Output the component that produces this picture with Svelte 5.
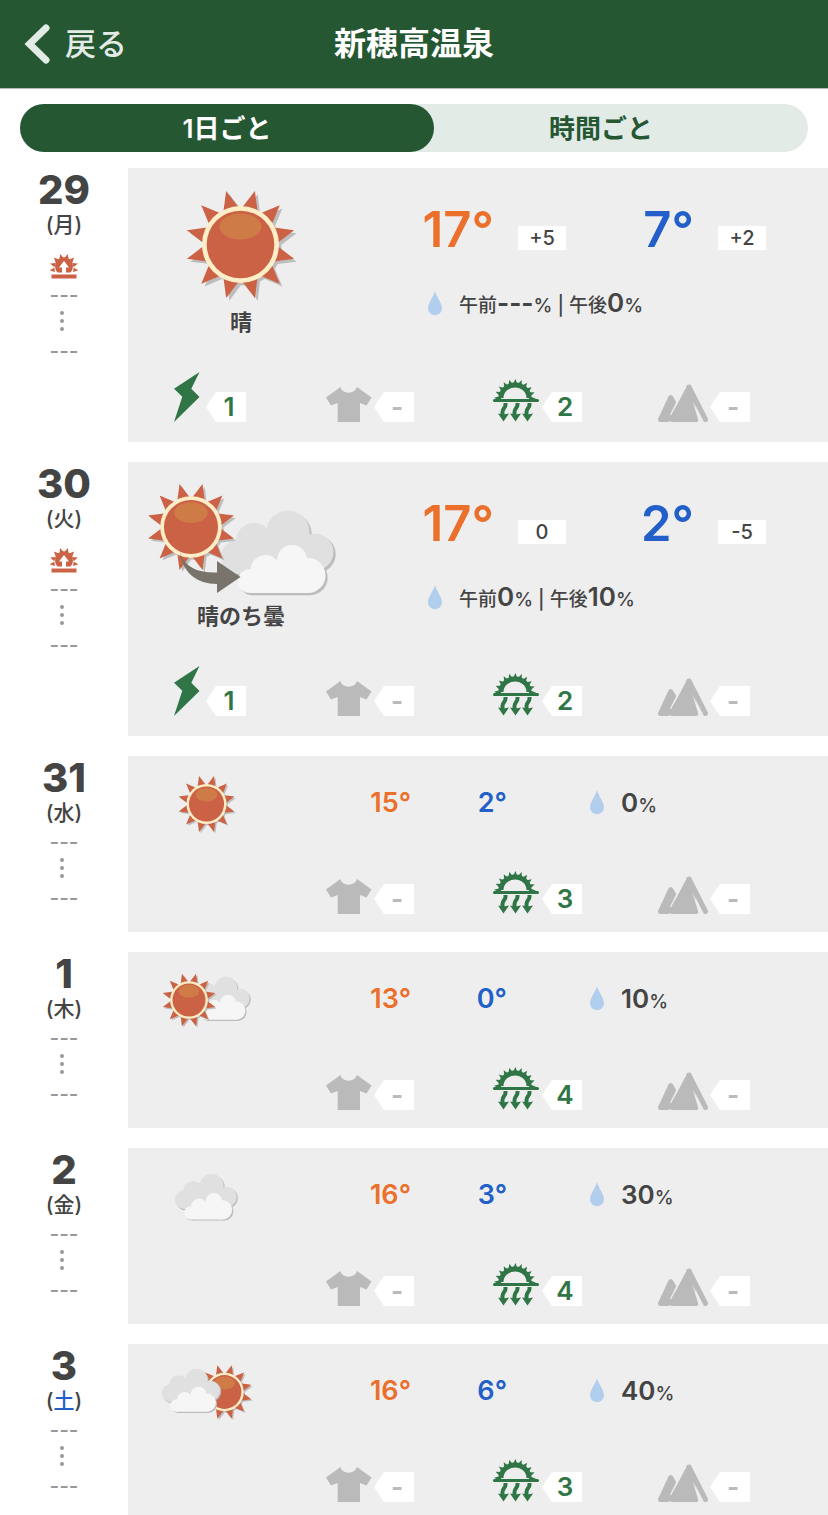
<script lang="ts">
  type Sky = 'sunny' | 'sunny-then-cloudy' | 'sunny-cloudy' | 'cloudy' | 'cloudy-sunny';

  interface Rain {
    label?: string;
    value: string;
  }

  interface Day {
    date: number;
    weekday: string;
    sky: Sky;
    skyLabel?: string;
    high: number;
    highDiff?: string;
    low: number;
    lowDiff?: string;
    rain: Rain[];
    thunder?: string;
    uv: string;
  }

  const days: Day[] = [
    {
      date: 29,
      weekday: '月',
      sky: 'sunny',
      skyLabel: '晴',
      high: 17,
      highDiff: '+5',
      low: 7,
      lowDiff: '+2',
      rain: [
        { label: '午前', value: '---' },
        { label: '午後', value: '0' }
      ],
      thunder: '1',
      uv: '2'
    },
    {
      date: 30,
      weekday: '火',
      sky: 'sunny-then-cloudy',
      skyLabel: '晴のち曇',
      high: 17,
      highDiff: '0',
      low: 2,
      lowDiff: '-5',
      rain: [
        { label: '午前', value: '0' },
        { label: '午後', value: '10' }
      ],
      thunder: '1',
      uv: '2'
    },
    { date: 31, weekday: '水', sky: 'sunny', high: 15, low: 2, rain: [{ value: '0' }], uv: '3' },
    { date: 1, weekday: '木', sky: 'sunny-cloudy', high: 13, low: 0, rain: [{ value: '10' }], uv: '4' },
    { date: 2, weekday: '金', sky: 'cloudy', high: 16, low: 3, rain: [{ value: '30' }], uv: '4' },
    { date: 3, weekday: '土', sky: 'cloudy-sunny', high: 16, low: 6, rain: [{ value: '40' }], uv: '3' }
  ];

  let tab = $state<'daily' | 'hourly'>('daily');

  const rays = Array.from({ length: 12 }, (_, i) => 15 + i * 30);
  const uvRays = Array.from({ length: 11 }, (_, i) => (i - 5) * 17);
  const riseRays = [-100, -72, -44, -15, 15, 44, 72, 100];
</script>

{#snippet sun(x: number, y: number, scale: number)}
  <g transform="translate({x} {y}) scale({scale})">
    <g transform="translate(3 3)" fill="#bdbdbd">
      {#each rays as r}
        <path d="M-8 -35L0 -55L8 -35z" transform="rotate({r})" />
      {/each}
      <circle r="38" />
    </g>
    {#each rays as r}
      <path d="M-8.500 -35L0 -55.500L8.500 -35z" transform="rotate({r})" fill="#cb6245" />
    {/each}
    <circle r="38.5" fill="#fdeec8" />
    <circle r="33.8" fill="#cb6245" />
    <ellipse cy="-18" rx="21" ry="13" fill="#cf7b47" />
  </g>
{/snippet}

{#snippet cloudBack()}
  <circle cx="73" cy="27" r="21.5" />
  <circle cx="39" cy="36" r="18" />
  <circle cx="23" cy="52" r="17" />
  <circle cx="100" cy="47" r="18.5" />
  <path d="M23 40H100V65L94 69H23z" />
{/snippet}

{#snippet cloudFront()}
  <circle cx="77" cy="55" r="15" />
  <circle cx="50.5" cy="65" r="15" />
  <circle cx="93" cy="70.5" r="17.5" />
  <circle cx="35" cy="76" r="12" />
  <path d="M35 68L77 55L93 70V88H35z" />
{/snippet}

{#snippet cloud(x: number, y: number, scale: number)}
  <g transform="translate({x} {y}) scale({scale})">
    <g transform="translate(2.200 2.200)" fill="#bdbdbd">{@render cloudBack()}{@render cloudFront()}</g>
    <g fill="#e0e0e0">{@render cloudBack()}</g>
    <g fill="#f6f6f6">{@render cloudFront()}</g>
  </g>
{/snippet}

{#snippet skyIcon(sky: Sky, large: boolean)}
  {#if large}
    <svg class="sky-large" viewBox="0 0 196 120" aria-hidden="true">
      {#if sky === 'sunny'}
        {@render sun(97.5, 60.5, 1)}
      {:else}
        {@render cloud(72, 27, 1)}
        {@render sun(48, 49, 0.8)}
        <path d="M37 75C42 89 54 95 74 94.500V83L97.500 99L74 115V106C54 106 40 95 37 75z" fill="#78736b" />
      {/if}
    </svg>
  {:else}
    <svg class="sky-small" viewBox="0 0 100 64" aria-hidden="true">
      {#if sky === 'sunny'}
        {@render sun(49.5, 32, 0.52)}
      {:else if sky === 'sunny-cloudy'}
        {@render cloud(31, 6, 0.52)}
        {@render sun(32, 32, 0.49)}
      {:else if sky === 'cloudy'}
        {@render cloud(14.5, 7, 0.55)}
      {:else}
        {@render sun(67.5, 32, 0.5)}
        {@render cloud(1.5, 6, 0.52)}
      {/if}
    </svg>
  {/if}
{/snippet}

{#snippet rainLine(rain: Rain[])}
  <div class="rain">
    <svg class="drop" viewBox="0 0 14 26" aria-hidden="true">
      <path d="M7 1C8 6 14 12.500 14 18.500A7 6.800 0 0 1 0 18.500C0 12.500 6 6 7 1z" fill="#b1cfec" />
    </svg>
    <p>
      {#each rain as r, i}{#if i > 0}{' | '}{/if}{r.label ?? ''}<b class:none={r.value === '---'}>{r.value}</b>%{/each}
    </p>
  </div>
{/snippet}

{#snippet indexes(day: Day)}
  <ul class="indexes">
    <li>
      {#if day.thunder}
        <svg viewBox="0 0 52 52" role="img" aria-label="雷">
          <path d="M45.500 2L20 18.700L28.300 26.700L20 52L45.500 27L37.300 18.700z" fill="#2f7545" />
        </svg>
        <span class="badge">{day.thunder}</span>
      {/if}
    </li>
    <li>
      <svg viewBox="0 0 52 52" role="img" aria-label="服装">
        <path
          d="M18.500 17C20 24.500 33 24.500 35 17L49.500 27.500L44.500 35.500L38 33V52H15.700V33L9 35.500L4 27.500z"
          fill="#bababa"
        />
      </svg>
      <span class="badge off">-</span>
    </li>
    <li>
      <svg viewBox="0 0 52 52" role="img" aria-label="紫外線">
        <g fill="#2f7545">
          {#each uvRays as r}
            <path d="M-3 -14L0.500 -21L3 -14z" transform="translate(25 30) rotate({r})" />
          {/each}
          <path d="M8.500 28A16.500 15.500 0 0 1 41.500 28H36.500A11.500 10.500 0 0 0 13.500 28z" />
          <path d="M8 43.500L13.500 51.500L19 43.500L13.500 44.500z" />
          <path d="M20 43.500L25.500 51.500L31 43.500L25.500 44.500z" />
          <path d="M32 43.500L37.500 51.500L43 43.500L37.500 44.500z" />
        </g>
        <g fill="none" stroke="#2f7545" stroke-width="4">
          <path d="M4.500 30.500H47.500" stroke-width="3" stroke-linecap="round" />
          <path d="M15.500 33V34.500C15.500 38.500 12.500 38 12.500 42V46" />
          <path d="M27.500 33V34.500C27.500 38.500 24.500 38 24.500 42V46" />
          <path d="M39.500 33V34.500C39.500 38.500 36.500 38 36.500 42V46" />
        </g>
      </svg>
      <span class="badge">{day.uv}</span>
    </li>
    <li>
      <svg viewBox="0 0 52 52" role="img" aria-label="登山">
        <g fill="#bababa" stroke="#bababa" stroke-width="5" stroke-linejoin="round" stroke-linecap="round">
          <path d="M2.500 49.500L12.700 27.500L16 33L10 49.500z" />
          <path d="M14 49.500L31 17.500L38 49.500z" />
          <path d="M31 17L47.500 49.500" />
        </g>
        <path d="M19.500 31L12.500 45" stroke="#eee" stroke-width="1.200" />
        <path d="M34.500 31L45 52H41z" fill="#eee" />
      </svg>
      <span class="badge off">-</span>
    </li>
  </ul>
{/snippet}

<div class="app">
  <header>
    <button type="button" class="back">
      <svg viewBox="0 0 26 40" aria-hidden="true">
        <path d="M22 4L5.500 20L22 36" fill="none" stroke="currentColor" stroke-width="7" stroke-linecap="round" />
      </svg>
      戻る
    </button>
    <h1>新穂高温泉</h1>
  </header>

  <div class="tabs" role="tablist">
    <button type="button" role="tab" aria-selected={tab === 'daily'} onclick={() => (tab = 'daily')}>1日ごと</button>
    <button type="button" role="tab" aria-selected={tab === 'hourly'} onclick={() => (tab = 'hourly')}>時間ごと</button>
  </div>

  <main>
    {#each days as day}
      <section>
        <div class="date">
          <h2>{day.date}</h2>
          <p class="weekday">(<span class:saturday={day.weekday === '土'}>{day.weekday}</span>)</p>
          {#if day.skyLabel}
            <svg class="sunrise" viewBox="0 0 28 26" role="img" aria-label="日の出">
              <g fill="#cb6245">
                {#each riseRays as r}
                  <path d="M-2.300 -9.500L0 -14.500L2.300 -9.500z" transform="translate(14 15) rotate({r})" />
                {/each}
                <path d="M7.500 19.500A9 9 0 1 1 20.500 19.500z" />
                <path d="M1.500 21.500H26.500V25.500H1.500z" />
              </g>
              <path d="M14 8L19 14.500H16V20H12V14.500H9z" fill="#fff" />
            </svg>
          {/if}
          <p class="time">---</p>
          <svg class="until" viewBox="0 0 4 20" aria-hidden="true">
            <circle cx="2" cy="2" r="2" />
            <circle cx="2" cy="10" r="2" />
            <circle cx="2" cy="18" r="2" />
          </svg>
          <p class="time">---</p>
        </div>

        {#if day.skyLabel}
          <div class="card large">
            <div class="summary">
              <div class="sky">
                {@render skyIcon(day.sky, true)}
                <p>{day.skyLabel}</p>
              </div>
              <div class="info">
                <div class="temps">
                  <p><span class="high">{day.high}°</span><span class="diff">{day.highDiff}</span></p>
                  <p><span class="low">{day.low}°</span><span class="diff">{day.lowDiff}</span></p>
                </div>
                {@render rainLine(day.rain)}
              </div>
            </div>
            {@render indexes(day)}
          </div>
        {:else}
          <div class="card small">
            <div class="summary">
              {@render skyIcon(day.sky, false)}
              <span class="high">{day.high}°</span>
              <span class="low">{day.low}°</span>
              {@render rainLine(day.rain)}
            </div>
            {@render indexes(day)}
          </div>
        {/if}
      </section>
    {/each}
  </main>
</div>

<style>
  :global(body) {
    background: #fff;
  }

  .app {
    display: flex;
    flex-direction: column;
    height: 100vh;
    color: #444;
    font-family: Inter, 'Noto Sans CJK JP', sans-serif;
  }

  h1,
  h2,
  p,
  ul {
    margin: 0;
    padding: 0;
  }

  svg {
    display: block;
    flex-shrink: 0;
  }

  button {
    border: 0;
    padding: 0;
    background: none;
    font-family: inherit;
    cursor: pointer;
  }

  header {
    display: grid;
    grid-template-columns: 1fr auto 1fr;
    align-items: center;
    flex-shrink: 0;
    height: 88px;
    padding: 0 24px;
    background: #255733;
    border-bottom: 1px solid #b4b9b5;
  }

  .back {
    display: flex;
    align-items: center;
    justify-self: start;
    gap: 15px;
    color: #e2ebe6;
    font-size: 31px;
    font-weight: 500;
    line-height: 40px;
  }

  .back svg {
    width: 26px;
    height: 40px;
  }

  h1 {
    color: #fff;
    font-size: 32px;
    font-weight: 700;
    line-height: 40px;
  }

  .tabs {
    display: flex;
    flex-shrink: 0;
    margin: 15px 20px 12px;
    border-radius: 24px;
    background: #e2ebe6;
  }

  .tabs button {
    flex: 1;
    height: 48px;
    padding-bottom: 4px;
    border-radius: 24px;
    color: #255733;
    font-size: 26px;
    font-weight: 600;
  }

  .tabs button + button {
    margin-left: -40px;
  }

  .tabs button[aria-selected='true'] {
    z-index: 1;
    background: #255733;
    color: #fff;
  }

  main {
    display: flex;
    flex: 1;
    flex-direction: column;
    gap: 20px;
    min-height: 0;
    padding-top: 4px;
    overflow-y: auto;
    scrollbar-width: none;
  }

  section {
    display: flex;
    flex-shrink: 0;
  }

  .date {
    display: flex;
    flex-direction: column;
    align-items: center;
    width: 128px;
  }

  h2 {
    font-size: 40px;
    font-weight: 800;
    line-height: 44px;
  }

  .weekday {
    font-size: 21px;
    font-weight: 500;
    line-height: 26px;
  }

  .saturday {
    color: #235fc8;
  }

  .sunrise {
    width: 28px;
    height: 26px;
    margin-top: 15px;
  }

  .time {
    margin-top: 4px;
    color: #999;
    font-size: 21px;
    font-weight: 500;
    line-height: 24px;
  }

  .until {
    width: 4px;
    height: 20px;
    margin: 4px 4px 4px 0;
    fill: #999;
  }

  .card {
    flex: 1;
    display: flex;
    flex-direction: column;
    justify-content: space-between;
    box-sizing: border-box;
    background: #eee;
  }

  .large {
    min-height: 274px;
    padding: 16px 0 20px;
  }

  .small {
    min-height: 176px;
    padding: 16px 0 18px;
  }

  .summary {
    display: grid;
  }

  .large .summary {
    grid-template-columns: 226fr 474fr;
  }

  .small .summary {
    grid-template-columns: 158fr 125fr 96fr 321fr;
    align-items: center;
  }

  .sky {
    display: flex;
    flex-direction: column;
    align-items: center;
  }

  .sky p {
    margin-top: 4px;
    font-size: 22px;
    font-weight: 700;
    line-height: 28px;
  }

  .sky-large {
    width: 196px;
    height: 120px;
  }

  .sky-small {
    justify-self: center;
    width: 100px;
    height: 64px;
  }

  .info {
    padding: 16px 62px 0 12px;
  }

  .temps {
    display: grid;
    grid-template-columns: 1fr 1fr;
  }

  .temps p {
    display: flex;
    align-items: flex-end;
    justify-content: flex-end;
    gap: 24px;
  }

  .high,
  .low {
    font-size: 49px;
    font-weight: 600;
    line-height: 60px;
  }

  .high {
    color: #eb702b;
  }

  .low {
    color: #235fc8;
  }

  .small .high,
  .small .low {
    justify-self: end;
    padding-bottom: 2px;
    font-size: 27px;
    line-height: 32px;
  }

  .diff {
    width: 48px;
    margin-bottom: 10px;
    background: #fff;
    font-size: 20px;
    font-weight: 500;
    line-height: 24px;
    text-align: center;
  }

  .rain {
    display: flex;
    align-items: center;
    gap: 17px;
    font-size: 19px;
    font-weight: 500;
    line-height: 32px;
    white-space: nowrap;
  }

  .rain b {
    font-size: 26px;
    font-weight: 600;
  }

  .rain .none {
    font-weight: 700;
  }

  .drop {
    width: 14px;
    height: 26px;
    margin-bottom: 4px;
  }

  .large .rain {
    margin: 27px 0 0 62px;
  }

  .small .rain {
    margin-left: 83px;
  }

  .indexes {
    display: grid;
    grid-template-columns: repeat(4, 1fr);
    padding: 0 14px;
    list-style: none;
  }

  .indexes li {
    display: flex;
    align-items: flex-end;
    justify-content: flex-end;
    padding-right: 64px;
  }

  .indexes svg {
    width: 52px;
    height: 52px;
  }

  .badge {
    box-sizing: border-box;
    width: 40px;
    padding-left: 6px;
    background: #fff;
    clip-path: polygon(0 50%, 25% 0, 100% 0, 100% 100%, 25% 100%);
    color: #2f7545;
    font-size: 26px;
    font-weight: 600;
    line-height: 30px;
    text-align: center;
  }

  .off {
    color: #bababa;
    font-weight: 700;
  }
</style>
